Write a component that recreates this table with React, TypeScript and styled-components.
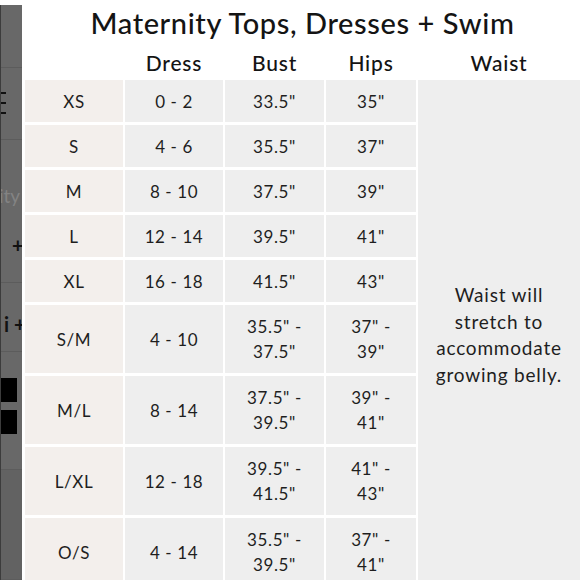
import React from "react";
import styled, { createGlobalStyle } from "styled-components";

const Global = createGlobalStyle`
  html, body { margin: 0; padding: 0; background: #ffffff; }
  body { width: 580px; height: 580px; overflow: hidden; font-family: "Lato", "Open Sans", sans-serif; color: #1c1c1c; }
`;

const Page = styled.div`
  display: flex;
  width: 580px;
  height: 580px;
  gap: 3px;
  overflow: hidden;
`;

const Strip = styled.div`
  width: 22px;
  flex: none;
  margin-top: 5px;
  display: flex;
  flex-direction: column;
  background: #686868;
  border-left: 1px solid #3c3c3c;
  box-sizing: border-box;
  overflow: hidden;
`;

const StripSeg = styled.div<{ $h: number; $dark?: boolean }>`
  height: ${(p) => p.$h}px;
  flex: ${(p) => (p.$h ? "none" : "1")};
  border-bottom: 1px solid #5c5c5c;
  background: ${(p) => (p.$dark ? "#626262" : "transparent")};
  display: flex;
  flex-direction: column;
  box-sizing: border-box;
`;

const Bars = styled.div`
  display: flex;
  flex-direction: column;
  gap: 8px;
  padding-top: 24px;
`;

const Bar = styled.div`
  width: 6px;
  height: 2px;
  background: #111;
  margin-left: -1px;
`;

const FaintText = styled.div`
  font-size: 19px;
  color: #838383;
  line-height: 20px;
  margin: 46px 0 0 -2px;
  white-space: nowrap;
`;

const Glyph = styled.div<{ $mt: number; $ml: number }>`
  font-size: 20px;
  font-weight: 700;
  color: #111;
  line-height: 20px;
  margin: ${(p) => p.$mt}px 0 0 ${(p) => p.$ml}px;
  white-space: nowrap;
`;

const Block = styled.div<{ $mt: number }>`
  width: 17px;
  height: 24px;
  background: #000;
  margin: ${(p) => p.$mt}px 0 0 -1px;
`;

const Main = styled.div`
  flex: 1;
  display: flex;
  flex-direction: column;
`;

const Title = styled.h1`
  margin: 0;
  height: 44px;
  flex: none;
  display: flex;
  align-items: center;
  justify-content: center;
  font-size: 29px;
  font-weight: 500;
  letter-spacing: 0.6px;
  color: #141414;
`;

const Table = styled.div`
  flex: none;
  display: grid;
  grid-template-columns: 98px 98px 99px 90px 1fr;
  grid-template-rows: 33px repeat(5, 42px) repeat(4, 68px);
  column-gap: 2px;
  row-gap: 3px;
`;

const Head = styled.div`
  display: flex;
  align-items: center;
  justify-content: center;
  font-size: 21px;
  font-weight: 500;
  letter-spacing: 0.8px;
  color: #141414;
  padding-top: 4px;
`;

const Cell = styled.div<{ $size?: boolean }>`
  display: flex;
  align-items: center;
  justify-content: center;
  text-align: center;
  background: ${(p) => (p.$size ? "#f3efec" : "#eeeeee")};
  font-size: 17px;
  letter-spacing: 0.6px;
  line-height: 25px;
  color: #1e1e1e;
`;

const WaistCell = styled(Cell)`
  grid-column: 5;
  grid-row: 2 / span 9;
  font-size: 19px;
  letter-spacing: 0.8px;
  line-height: 26.5px;
  padding-top: 4px;
`;

type Row = [string, string, string[], string[]];

const rows: Row[] = [
  ["XS", "0 - 2", ['33.5"'], ['35"']],
  ["S", "4 - 6", ['35.5"'], ['37"']],
  ["M", "8 - 10", ['37.5"'], ['39"']],
  ["L", "12 - 14", ['39.5"'], ['41"']],
  ["XL", "16 - 18", ['41.5"'], ['43"']],
  ["S/M", "4 - 10", ['35.5" -', '37.5"'], ['37" -', '39"']],
  ["M/L", "8 - 14", ['37.5" -', '39.5"'], ['39" -', '41"']],
  ["L/XL", "12 - 18", ['39.5" -', '41.5"'], ['41" -', '43"']],
  ["O/S", "4 - 14", ['35.5" -', '39.5"'], ['37" -', '41"']],
];

const Lines = ({ lines }: { lines: string[] }) => (
  <span>
    {lines.map((l, i) => (
      <React.Fragment key={i}>
        {i > 0 && <br />}
        {l}
      </React.Fragment>
    ))}
  </span>
);

export default function App() {
  return (
    <>
      <Global />
      <Page>
        <Strip>
          <StripSeg $h={63} />
          <StripSeg $h={72}>
            <Bars>
              <Bar />
              <Bar />
              <Bar />
            </Bars>
          </StripSeg>
          <StripSeg $h={143}>
            <FaintText>ity</FaintText>
            <Glyph $mt={29} $ml={11}>+</Glyph>
          </StripSeg>
          <StripSeg $h={69}>
            <Glyph $mt={31} $ml={3}>i +</Glyph>
          </StripSeg>
          <StripSeg $h={118}>
            <Block $mt={26} />
            <Block $mt={8} />
          </StripSeg>
          <StripSeg $h={0} $dark />
        </Strip>
        <Main>
          <Title>Maternity Tops, Dresses + Swim</Title>
          <Table>
            <span />
            <Head>Dress</Head>
            <Head>Bust</Head>
            <Head>Hips</Head>
            <Head>Waist</Head>
            {rows.map(([size, dress, bust, hips]) => (
              <React.Fragment key={size}>
                <Cell $size>{size}</Cell>
                <Cell>{dress}</Cell>
                <Cell>
                  <Lines lines={bust} />
                </Cell>
                <Cell>
                  <Lines lines={hips} />
                </Cell>
              </React.Fragment>
            ))}
            <WaistCell>
              <span>
                Waist will
                <br />
                stretch to
                <br />
                accommodate
                <br />
                growing belly.
              </span>
            </WaistCell>
          </Table>
        </Main>
      </Page>
    </>
  );
}
